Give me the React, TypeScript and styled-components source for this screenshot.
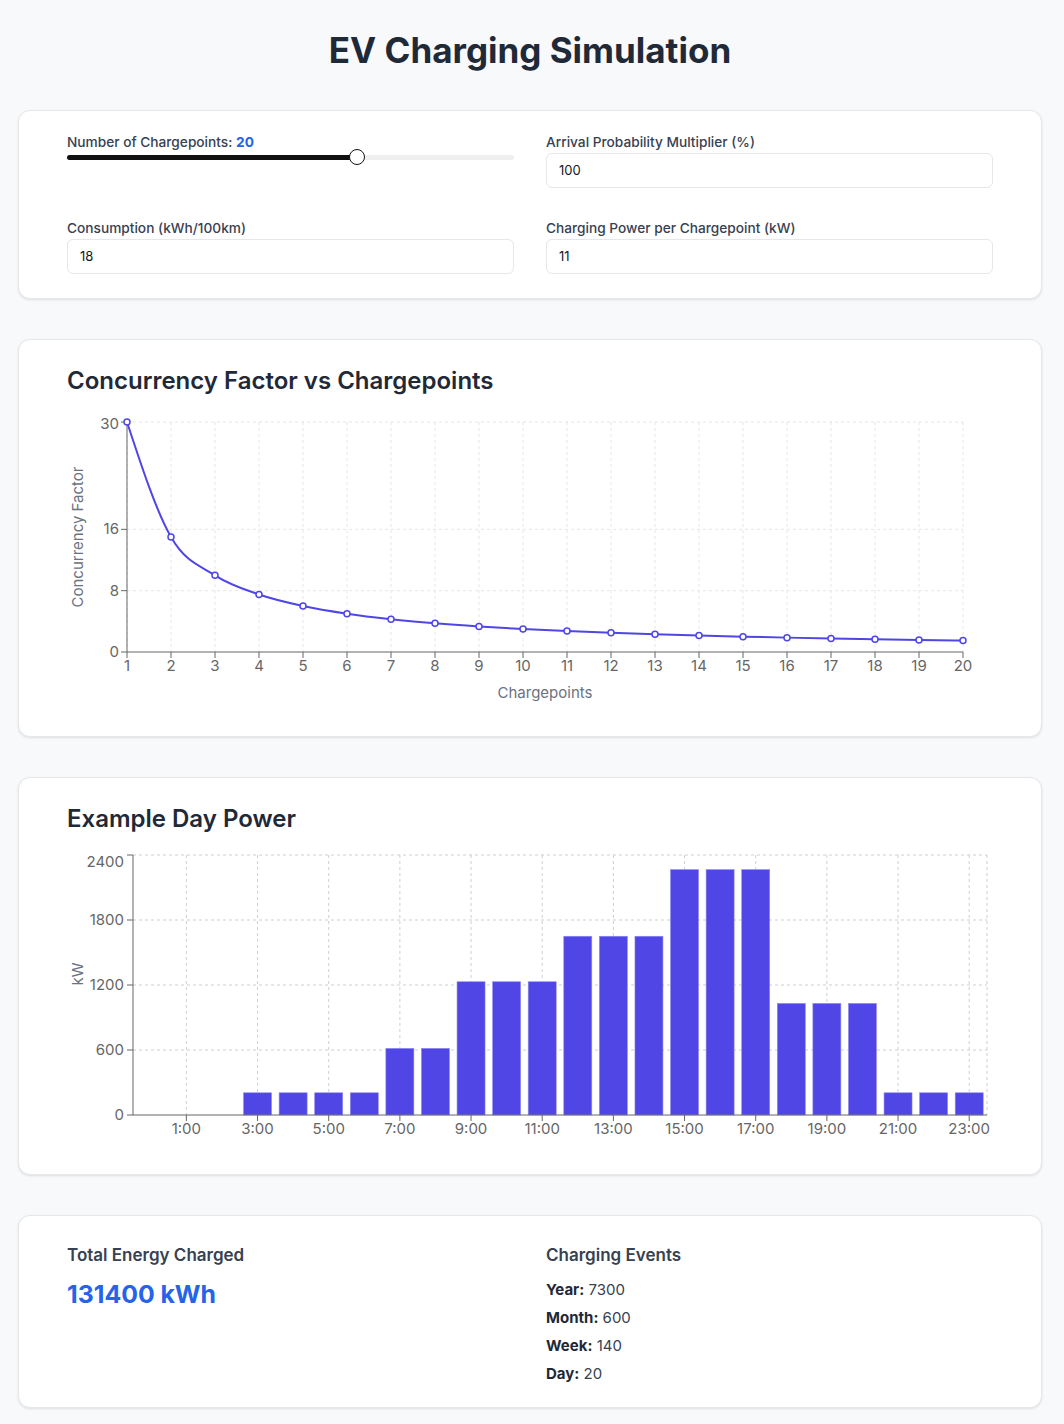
import React, { useState } from "react";
import styled, { createGlobalStyle } from "styled-components";

const GlobalStyle = createGlobalStyle`
  * { box-sizing: border-box; }
  body {
    margin: 0;
    background: #f8f9fb;
    font-family: Inter, "Liberation Sans", "Noto Sans", sans-serif;
    color: #1f2937;
  }
`;

const Page = styled.div`
  padding: 30px 22px 16px 18px;
`;

const Title = styled.h1`
  margin: 0 0 40px;
  text-align: center;
  font-size: 35px;
  line-height: 40px;
  font-weight: 700;
  color: #1f2937;
`;

const Stack = styled.div`
  display: flex;
  flex-direction: column;
  gap: 40px;
`;

const Card = styled.section<{ $top?: number; $bottom?: number }>`
  background: #fff;
  border: 1px solid #e5e7eb;
  border-radius: 12px;
  box-shadow: 0 1px 3px rgba(0, 0, 0, 0.07), 0 1px 2px rgba(0, 0, 0, 0.04);
  padding: ${(p) => p.$top ?? 23}px 48px ${(p) => p.$bottom ?? 24}px;
`;

const TwoCols = styled.div`
  display: grid;
  grid-template-columns: 1fr 1fr;
  gap: 32px;
`;

const Field = styled.div`
  display: flex;
  flex-direction: column;
`;

const FieldLabel = styled.label`
  font-size: 13.7px;
  line-height: 16px;
  font-weight: 500;
  color: #374151;
  margin-bottom: 3px;
`;

const Accent = styled.span`
  color: #2563eb;
  font-weight: 700;
`;

const TextInput = styled.input`
  font-family: inherit;
  font-size: 13px;
  line-height: 17px;
  padding: 8px 12px;
  border: 1px solid #e5e7eb;
  border-radius: 6px;
  color: #111827;
  background: #fff;
  outline: none;
`;

const Slider = styled.input`
  -webkit-appearance: none;
  appearance: none;
  display: block;
  width: 100%;
  height: 16px;
  margin: -4px 0 0;
  background: transparent;

  &::-webkit-slider-runnable-track {
    height: 5px;
    border-radius: 3px;
    background: var(--track);
  }

  &::-webkit-slider-thumb {
    -webkit-appearance: none;
    width: 16px;
    height: 16px;
    margin-top: -5.5px;
    border-radius: 50%;
    background: #fff;
    border: 1.5px solid #111;
  }
`;

const ChartTitle = styled.h2`
  margin: 0 0 8px;
  font-size: 24px;
  line-height: 36px;
  font-weight: 600;
  color: #1f2937;
`;

const ChartSvg = styled.svg`
  display: block;
  font-family: Inter, "Liberation Sans", sans-serif;
`;

const StatHeading = styled.h3`
  margin: 0;
  font-size: 17px;
  line-height: 28px;
  font-weight: 600;
  color: #374151;
`;

const BigValue = styled.div`
  margin-top: 9px;
  font-size: 24.8px;
  line-height: 32px;
  font-weight: 700;
  color: #2563eb;
`;

const EventList = styled.ul`
  list-style: none;
  margin: 7px 0 0;
  padding: 0;
`;

const EventItem = styled.li`
  font-size: 15px;
  line-height: 28px;
  color: #374151;

  b {
    font-weight: 700;
    color: #1f2937;
  }
`;

// ---------- concurrency chart ----------

const LINE = "#4f46e5";
const AXIS = "#666";

function monotonePath(pts: [number, number][]) {
  const n = pts.length;
  const slopes: number[] = [];
  for (let i = 0; i < n - 1; i++) {
    slopes.push((pts[i + 1][1] - pts[i][1]) / (pts[i + 1][0] - pts[i][0]));
  }
  const m: number[] = new Array(n).fill(0);
  for (let i = 1; i < n - 1; i++) {
    const h0 = pts[i][0] - pts[i - 1][0];
    const h1 = pts[i + 1][0] - pts[i][0];
    const s0 = slopes[i - 1];
    const s1 = slopes[i];
    const p = (s0 * h1 + s1 * h0) / (h0 + h1);
    m[i] =
      (Math.sign(s0) + Math.sign(s1)) *
        Math.min(Math.abs(s0), Math.abs(s1), 0.5 * Math.abs(p)) || 0;
  }
  m[0] = (3 * slopes[0] - m[1]) / 2;
  m[n - 1] = (3 * slopes[n - 2] - m[n - 2]) / 2;
  let d = `M${pts[0][0]},${pts[0][1]}`;
  for (let i = 0; i < n - 1; i++) {
    const [x0, y0] = pts[i];
    const [x1, y1] = pts[i + 1];
    const dx = (x1 - x0) / 3;
    d += `C${x0 + dx},${y0 + dx * m[i]},${x1 - dx},${y1 - dx * m[i + 1]},${x1},${y1}`;
  }
  return d;
}

const ConcurrencyChart: React.FC<{ count: number }> = ({ count }) => {
  const W = 926;
  const H = 305;
  const left = 60;
  const right = 896;
  const top = 15;
  const base = 245;
  const maxY = 30;
  const xs = Array.from({ length: count }, (_, i) => i + 1);
  const sx = (v: number) => left + ((v - 1) / (count - 1)) * (right - left);
  const sy = (v: number) => base - (v / maxY) * (base - top);
  const pts: [number, number][] = xs.map((n) => [sx(n), sy(30 / n)]);
  const yTicks = [0, 8, 16, 30];

  return (
    <ChartSvg width={W} height={H}>
      <g stroke="#e6e6e6" strokeDasharray="3 3">
        {yTicks.slice(1).map((t) => (
          <line key={t} x1={left} x2={right} y1={sy(t)} y2={sy(t)} />
        ))}
        {xs.map((n) => (
          <line key={n} x1={sx(n)} x2={sx(n)} y1={top} y2={base} />
        ))}
      </g>
      <g stroke={AXIS}>
        <line x1={left} x2={left} y1={top} y2={base} />
        <line x1={left} x2={right} y1={base} y2={base} />
        {yTicks.map((t) => (
          <line key={t} x1={left - 6} x2={left} y1={sy(t)} y2={sy(t)} />
        ))}
        {xs.map((n) => (
          <line key={n} x1={sx(n)} x2={sx(n)} y1={base} y2={base + 6} />
        ))}
      </g>
      <g fill={AXIS} fontSize="15">
        {yTicks.map((t) => (
          <text key={t} x={left - 8} y={sy(t) + 5 + (t === 30 ? 2 : 0)} textAnchor="end">
            {t}
          </text>
        ))}
        {xs.map((n) => (
          <text key={n} x={sx(n)} y={base + 19} textAnchor="middle">
            {n}
          </text>
        ))}
        <text x={(left + right) / 2} y={H - 14} textAnchor="middle" fill="#6b7280">
          Chargepoints
        </text>
        <text
          x={16}
          y={130}
          textAnchor="middle"
          fill="#6b7280"
          transform="rotate(-90 16 130)"
        >
          Concurrency Factor
        </text>
      </g>
      <path d={monotonePath(pts)} fill="none" stroke={LINE} strokeWidth={2} />
      {pts.map(([x, y], i) => (
        <circle key={i} cx={x} cy={y} r={3} fill="#fff" stroke={LINE} strokeWidth={1.5} />
      ))}
    </ChartSvg>
  );
};

// ---------- day power chart ----------

const hourly = [
  0, 0, 0, 205, 205, 205, 205, 615, 615, 1230, 1230, 1230, 1650, 1650, 1650,
  2265, 2265, 2265, 1030, 1030, 1030, 205, 205, 205,
];

const DayPowerChart: React.FC = () => {
  const W = 926;
  const H = 305;
  const left = 66;
  const right = 920;
  const top = 10;
  const base = 270;
  const maxY = 2400;
  const band = (right - left) / hourly.length;
  const barW = 28;
  const sy = (v: number) => base - (v / maxY) * (base - top);
  const yTicks = [0, 600, 1200, 1800, 2400];
  const hourTicks = hourly.map((_, h) => h).filter((h) => h % 2 === 1);
  const cx = (h: number) => left + band * (h + 0.5);

  return (
    <ChartSvg width={W} height={H}>
      <g stroke="#cfcfcf" strokeDasharray="3 3">
        {yTicks.slice(1).map((t) => (
          <line key={t} x1={left} x2={right} y1={sy(t)} y2={sy(t)} />
        ))}
        {hourTicks.map((h) => (
          <line key={h} x1={cx(h)} x2={cx(h)} y1={top} y2={base} />
        ))}
        <line x1={right} x2={right} y1={top} y2={base} />
      </g>
      {hourly.map((v, h) =>
        v > 0 ? (
          <rect
            key={h}
            x={left + band * h + (band - barW) / 2}
            y={sy(v)}
            width={barW}
            height={base - sy(v)}
            fill={LINE}
            stroke="#8f89ee"
            strokeWidth={0.6}
          />
        ) : null
      )}
      <g stroke={AXIS}>
        <line x1={left} x2={left} y1={top} y2={base} />
        <line x1={left} x2={right} y1={base} y2={base} />
        {yTicks.map((t) => (
          <line key={t} x1={left - 6} x2={left} y1={sy(t)} y2={sy(t)} />
        ))}
        {hourTicks.map((h) => (
          <line key={h} x1={cx(h)} x2={cx(h)} y1={base} y2={base + 6} />
        ))}
      </g>
      <g fill={AXIS} fontSize="15">
        {yTicks.map((t) => (
          <text key={t} x={left - 9} y={sy(t) + 5 + (t === 2400 ? 7 : 0)} textAnchor="end">
            {t}
          </text>
        ))}
        {hourTicks.map((h) => (
          <text key={h} x={cx(h)} y={base + 19} textAnchor="middle">
            {h}:00
          </text>
        ))}
        <text x={16} y={129} textAnchor="middle" fill="#6b7280" transform="rotate(-90 16 129)">
          kW
        </text>
      </g>
    </ChartSvg>
  );
};

export default function App() {
  const [count, setCount] = useState(20);
  const [arrival, setArrival] = useState("100");
  const [consumption, setConsumption] = useState("18");
  const [power, setPower] = useState("11");

  const min = 1;
  const max = 30;
  const frac = (count - min) / (max - min);
  const track = `linear-gradient(to right, #111 0, #111 calc(8px + (100% - 16px) * ${frac}), #efefef calc(8px + (100% - 16px) * ${frac}), #efefef 100%)`;

  const perDay = count;
  const energy = perDay * 365 * 18;

  return (
    <>
      <GlobalStyle />
      <Page>
        <Title>EV Charging Simulation</Title>
        <Stack>
          <Card>
            <TwoCols>
              <Field>
                <FieldLabel>
                  Number of Chargepoints: <Accent>{count}</Accent>
                </FieldLabel>
                <Slider
                  type="range"
                  min={min}
                  max={max}
                  value={count}
                  onChange={(e) => setCount(Number(e.target.value))}
                  style={{ ["--track" as string]: track } as React.CSSProperties}
                />
              </Field>
              <Field>
                <FieldLabel>Arrival Probability Multiplier (%)</FieldLabel>
                <TextInput value={arrival} onChange={(e) => setArrival(e.target.value)} />
              </Field>
              <Field>
                <FieldLabel>Consumption (kWh/100km)</FieldLabel>
                <TextInput value={consumption} onChange={(e) => setConsumption(e.target.value)} />
              </Field>
              <Field>
                <FieldLabel>Charging Power per Chargepoint (kW)</FieldLabel>
                <TextInput value={power} onChange={(e) => setPower(e.target.value)} />
              </Field>
            </TwoCols>
          </Card>

          <Card>
            <ChartTitle>Concurrency Factor vs Chargepoints</ChartTitle>
            <ConcurrencyChart count={count} />
          </Card>

          <Card>
            <ChartTitle>Example Day Power</ChartTitle>
            <DayPowerChart />
          </Card>

          <Card $top={25} $bottom={19}>
            <TwoCols>
              <div>
                <StatHeading>Total Energy Charged</StatHeading>
                <BigValue>{energy} kWh</BigValue>
              </div>
              <div>
                <StatHeading>Charging Events</StatHeading>
                <EventList>
                  <EventItem>
                    <b>Year:</b> {perDay * 365}
                  </EventItem>
                  <EventItem>
                    <b>Month:</b> {perDay * 30}
                  </EventItem>
                  <EventItem>
                    <b>Week:</b> {perDay * 7}
                  </EventItem>
                  <EventItem>
                    <b>Day:</b> {perDay}
                  </EventItem>
                </EventList>
              </div>
            </TwoCols>
          </Card>
        </Stack>
      </Page>
    </>
  );
}
